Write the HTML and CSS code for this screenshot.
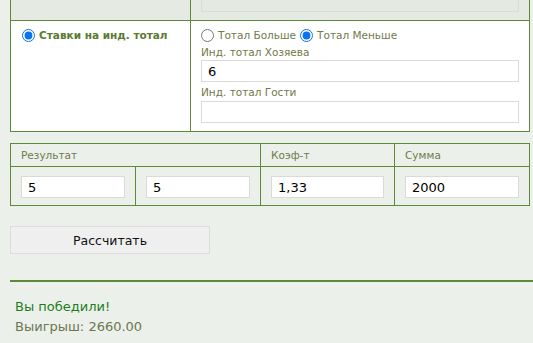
FILE: index.html
```html
<!DOCTYPE html>
<html lang="ru">
<head>
    <meta charset="UTF-8">
    <title>Калькулятор ставок</title>
    <link rel="stylesheet" href="styles.css">
</head>
<body>
    <div class="calc">
        <table class="bets">
            <colgroup><col class="col-type"><col></colgroup>
            <tr class="row-muted">
                <td></td>
                <td><input type="text" class="field field-off" disabled></td>
            </tr>
            <tr>
                <td>
                    <label class="bet-type"><input type="radio" name="bet" checked> Ставки на инд. тотал</label>
                </td>
                <td>
                    <div class="choice">
                        <label><input type="radio" name="side"> Тотал Больше</label>
                        <label><input type="radio" name="side" checked> Тотал Меньше</label>
                    </div>
                    <div class="caption">Инд. тотал Хозяева</div>
                    <input type="text" class="field" value="6">
                    <div class="caption caption-next">Инд. тотал Гости</div>
                    <input type="text" class="field">
                </td>
            </tr>
        </table>

        <table class="sums">
            <colgroup><col class="c1"><col class="c2"><col class="c3"><col class="c4"></colgroup>
            <tr class="head">
                <td colspan="2">Результат</td>
                <td>Коэф-т</td>
                <td>Сумма</td>
            </tr>
            <tr class="vals">
                <td><input type="text" class="field" value="5"></td>
                <td><input type="text" class="field" value="5"></td>
                <td><input type="text" class="field" value="1,33"></td>
                <td><input type="text" class="field" value="2000"></td>
            </tr>
        </table>

        <button class="btn-calc">Рассчитать</button>

        <div class="result">
            <div class="win">Вы победили!</div>
            <div class="payout">Выигрыш: 2660.00</div>
        </div>
    </div>
</body>
</html>
```

FILE: styles.css
```css
body { margin: 0; padding: 0 0 0 10px; background: #ecf0ea; font-family: "DejaVu Sans", Verdana, sans-serif; overflow: hidden; }
.calc { width: 523px; }

table { border-collapse: collapse; table-layout: fixed; width: 520px; }
td { border: 1px solid #5c8a37; vertical-align: top; }

.bets { margin-top: -16px; background: #fff; }
.bets .col-type { width: 180px; }
.bets td { padding: 5px 10px 8px 10px; }
.bets .row-muted td { background: #e5eae3; }
.bets td:first-child { padding-left: 11px; }

.bet-type { display: flex; align-items: center; height: 18px; font-size: 10.5px; font-weight: bold; color: #5a7b30; }
.choice { display: flex; align-items: center; height: 18px; font-size: 10.5px; color: #6f7b4b; }
.choice label { display: flex; align-items: center; margin-right: 4px; }
input[type="radio"] { width: 13px; height: 13px; margin: 0 4px 0 0; accent-color: #0a74f0; }
.caption { font-size: 10.5px; line-height: 16px; color: #747845; }
.caption-next { margin-top: 1px; line-height: 18px; }

.field { display: block; box-sizing: border-box; width: 100%; height: 22px; margin: 0; padding: 0 6px; border: 1px solid #dadada; background: #fff; font-family: "DejaVu Sans", Verdana, sans-serif; font-size: 13px; color: #000; outline: none; }
.field-off { background: #e4e9e2; border-color: #d9ddd6; }

.sums { margin-top: 11px; }
.sums .c1, .sums .c2 { width: 125px; }
.sums .c3 { width: 134px; }
.head td { padding: 0 10px; height: 22px; line-height: 22px; font-size: 10.5px; color: #6f7b4b; }
.vals td { padding: 9px 10px 7px 10px; }

.btn-calc { display: block; width: 200px; height: 28px; margin-top: 20px; padding: 0; background: #efefef; border: 1px solid #dcdcdc; font-family: "DejaVu Sans", Verdana, sans-serif; font-size: 12.5px; color: #111; }

.result { margin-top: 26px; border-top: 2px solid #5c8a37; padding: 15px 0 0 5px; font-size: 13px; line-height: 20px; }
.win { color: #1d7d1d; }
.payout { color: #6b7751; }
```
